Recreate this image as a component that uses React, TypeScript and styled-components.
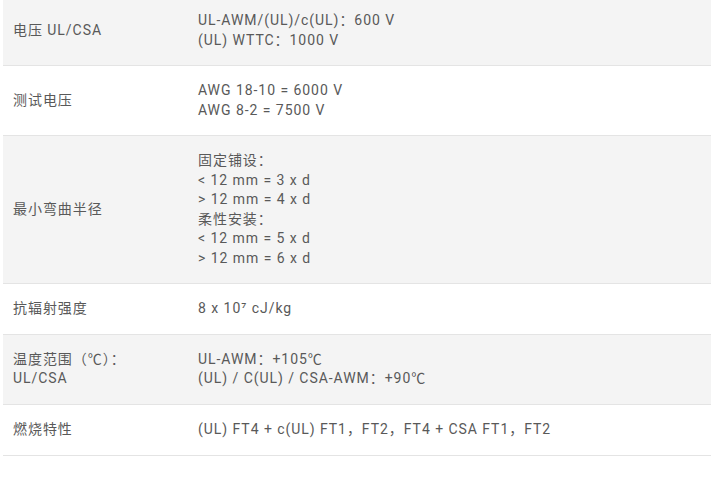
import React from "react";
import styled, { createGlobalStyle } from "styled-components";

const Global = createGlobalStyle`
  html, body { margin: 0; padding: 0; background: #fff; }
  body { font-family: Roboto, "Noto Sans CJK SC", sans-serif; }
`;

const Page = styled.div`
  padding-left: 3px;
  margin-top: -4px;
`;

const Table = styled.div`
  display: flex;
  flex-direction: column;
  width: 708px;
`;

const Row = styled.div<{ $shaded: boolean }>`
  display: grid;
  grid-template-columns: 185px 1fr;
  background: ${(p) => (p.$shaded ? "#f4f4f4" : "#ffffff")};
  border-bottom: 1px solid #e4e4e4;
  &:last-child {
    min-height: 50px;
  }
`;

const Cell = styled.div`
  padding: 15px 10px;
  font-size: 14px;
  line-height: 19.5px;
  letter-spacing: 0.95px;
  color: #595959;
  display: flex;
  flex-direction: column;
  justify-content: center;
`;

const Line = styled.span`
  display: block;
  white-space: nowrap;
`;

const rows: { label: string[]; value: string[] }[] = [
  { label: ["电压 UL/CSA"], value: ["UL-AWM/(UL)/c(UL)：600 V", "(UL) WTTC：1000 V"] },
  { label: ["测试电压"], value: ["AWG 18-10 = 6000 V", "AWG 8-2 = 7500 V"] },
  {
    label: ["最小弯曲半径"],
    value: ["固定铺设：", "< 12 mm = 3 x d", "> 12 mm = 4 x d", "柔性安装：", "< 12 mm = 5 x d", "> 12 mm = 6 x d"],
  },
  { label: ["抗辐射强度"], value: ["8 x 10⁷ cJ/kg"] },
  { label: ["温度范围（℃）：", "UL/CSA"], value: ["UL-AWM：+105℃", "(UL) / C(UL) / CSA-AWM：+90℃"] },
  { label: ["燃烧特性"], value: ["(UL) FT4 + c(UL) FT1，FT2，FT4 + CSA FT1，FT2"] },
];

export default function App() {
  return (
    <>
      <Global />
      <Page>
        <Table>
          {rows.map((r, i) => (
            <Row key={i} $shaded={i % 2 === 0}>
              <Cell>
                {r.label.map((l, j) => (
                  <Line key={j}>{l}</Line>
                ))}
              </Cell>
              <Cell>
                {r.value.map((v, j) => (
                  <Line key={j}>{v}</Line>
                ))}
              </Cell>
            </Row>
          ))}
        </Table>
      </Page>
    </>
  );
}
